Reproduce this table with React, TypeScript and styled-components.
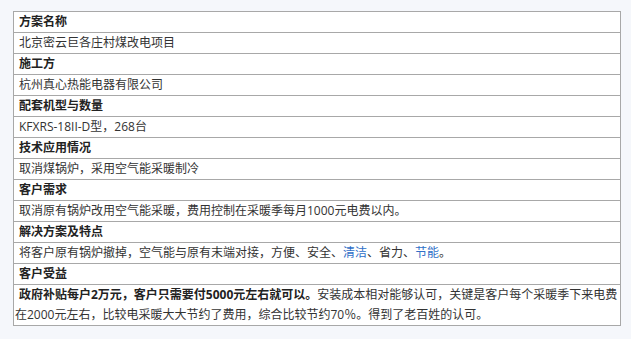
import React from "react";
import styled, { createGlobalStyle } from "styled-components";

const Global = createGlobalStyle`
  html, body { margin: 0; padding: 0; background: #f5f7fb; }
  body { font-family: "Open Sans", "Noto Sans CJK SC", sans-serif; }
`;

const Page = styled.div`
  padding: 11px 0 0 13px;
`;

const Table = styled.div`
  width: 608px;
  box-sizing: border-box;
  border: 1px solid #a8a8a8;
  border-bottom: none;
  background: #ffffff;
`;

const Row = styled.div<{ $head?: boolean }>`
  border-bottom: 1px solid #a8a8a8;
  padding: 0 1px;
  min-height: 20px;
  line-height: 20px;
  font-size: 12px;
  text-indent: 4px;
  color: ${(p) => (p.$head ? "#222222" : "#333333")};
  font-weight: ${(p) => (p.$head ? 700 : 400)};
`;

const Blue = styled.span`
  color: #2f6fc7;
`;

const Strong = styled.b`
  font-weight: 700;
  color: #222222;
`;

const rows: Array<[string, React.ReactNode]> = [
  ["方案名称", "北京密云巨各庄村煤改电项目"],
  ["施工方", "杭州真心热能电器有限公司"],
  ["配套机型与数量", "KFXRS-18II-D型，268台"],
  ["技术应用情况", "取消煤锅炉，采用空气能采暖制冷"],
  ["客户需求", "取消原有锅炉改用空气能采暖，费用控制在采暖季每月1000元电费以内。"],
  [
    "解决方案及特点",
    <>
      将客户原有锅炉撤掉，空气能与原有末端对接，方便、安全、<Blue>清洁</Blue>、省力、<Blue>节能</Blue>。
    </>,
  ],
  [
    "客户受益",
    <>
      <Strong>政府补贴每户2万元，客户只需要付5000元左右就可以。</Strong>
      安装成本相对能够认可，关键是客户每个采暖季下来电费在2000元左右，比较电采暖大大节约了费用，综合比较节约70％。得到了老百姓的认可。
    </>,
  ],
];

export default function App() {
  return (
    <>
      <Global />
      <Page>
        <Table>
          {rows.map(([h, v]) => (
            <React.Fragment key={h}>
              <Row $head>{h}</Row>
              <Row>{v}</Row>
            </React.Fragment>
          ))}
        </Table>
      </Page>
    </>
  );
}
